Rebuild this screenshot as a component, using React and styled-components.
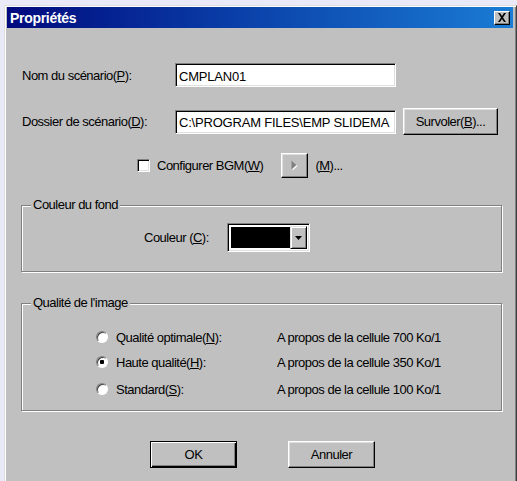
import React from 'react'
import styled, { createGlobalStyle } from 'styled-components'

const Global = createGlobalStyle`
    html, body {
        margin:0;
        padding:0;
        background:#e9e9f7;
        overflow:hidden;
    }
    body{
        font-family:"Liberation Sans", Arial, sans-serif;
        font-size:13px;
        letter-spacing:-0.5px;
        color:#000;
    }
`;

function U({ children }) {
    return <u>{children}</u>
}

function App() {
    return (
        <>
            <Global />
            <Window>
                <TitleBar>
                    <Title>Propriétés</Title>
                    <CloseBox>
                        <svg width="10" height="9" viewBox="0 0 10 9">
                            <path d="M1 0h2l2 3 2-3h2L6 4.5 9 9H7L5 6 3 9H1l3-4.5z" fill="#000" />
                        </svg>
                    </CloseBox>
                </TitleBar>
                <Body>
                    <FieldRow $top={35}>
                        <Label>Nom du scénario(<U>P</U>):</Label>
                        <TextBox $width={221}>CMPLAN01</TextBox>
                    </FieldRow>
                    <FieldRow $top={21}>
                        <Label>Dossier de scénario(<U>D</U>):</Label>
                        <TextBox $width={221}>C:\PROGRAM FILES\EMP SLIDEMA</TextBox>
                        <Button $width={95} $height={27} $ml={7}>Survoler(<U>B</U>)...</Button>
                    </FieldRow>
                    <BgmRow>
                        <CheckBox />
                        <span>Configurer BGM(<U>W</U>)</span>
                        <PlayButton>
                            <svg width="9" height="13" viewBox="0 0 9 13">
                                <path d="M1.5 1.5 L6.5 6 L1.5 10.5 Z" fill="#fff" transform="translate(1 1)" />
                                <path d="M1.5 1.5 L6.5 6 L1.5 10.5 Z" fill="#808080" />
                            </svg>
                        </PlayButton>
                        <span>(<U>M</U>)...</span>
                    </BgmRow>
                    <Group $top={27} $height={67}>
                        <Legend>Couleur du fond</Legend>
                        <ColorRow>
                            <span>Couleur (<U>C</U>):</span>
                            <Combo>
                                <Swatch />
                                <DropButton>
                                    <svg width="7" height="4" viewBox="0 0 7 4">
                                        <path d="M0 0h7L3.5 4z" fill="#000" />
                                    </svg>
                                </DropButton>
                            </Combo>
                        </ColorRow>
                    </Group>
                    <Group $top={31} $height={108}>
                        <Legend>Qualité de l'image</Legend>
                        <RadioList>
                            <RadioRow $top={24}>
                                <Radio />
                                <RadioLabel>Qualité optimale(<U>N</U>):</RadioLabel>
                                <span>A propos de la cellule 700 Ko/1</span>
                            </RadioRow>
                            <RadioRow $top={7}>
                                <Radio $checked />
                                <RadioLabel>Haute qualité(<U>H</U>):</RadioLabel>
                                <span>A propos de la cellule 350 Ko/1</span>
                            </RadioRow>
                            <RadioRow $top={9}>
                                <Radio />
                                <RadioLabel>Standard(<U>S</U>):</RadioLabel>
                                <span>A propos de la cellule 100 Ko/1</span>
                            </RadioRow>
                        </RadioList>
                    </Group>
                    <ButtonRow>
                        <Button $width={87} $height={27} $default>OK</Button>
                        <Button $width={87} $height={27}>Annuler</Button>
                    </ButtonRow>
                </Body>
            </Window>
        </>
    )
}

const Window = styled.div`
    margin:5px 0 0 4px;
    height:475px;
    background:#c0c0c0;
    border-top:1px solid #dfdfdf;
    border-left:1px solid #dfdfdf;
    border-right:1px solid #404040;
    box-shadow:inset 1px 1px #fff, inset -1px 0 #808080;
    padding:1px 3px 0 2px;
`;

const TitleBar = styled.div`
    height:21px;
    display:flex;
    align-items:center;
    justify-content:space-between;
    padding:0 3px 0 3px;
    background:linear-gradient(90deg, #000a7e 0%, #0a3fa8 45%, #1a7cd4 100%);
`;

const Title = styled.span`
    color:#fff;
    font-weight:bold;
    font-size:14px;
    letter-spacing:-0.3px;
`;

const CloseBox = styled.div`
    width:16px;
    height:14px;
    display:flex;
    align-items:center;
    justify-content:center;
    background:#c0c0c0;
    border:1px solid;
    border-color:#fff #000 #000 #fff;
    box-shadow:inset -1px -1px #808080;
    box-sizing:border-box;
`;

const Body = styled.div`
    padding:0 0 0 15px;
`;

const FieldRow = styled.div`
    display:flex;
    align-items:center;
    margin-top:${p => p.$top}px;
`;

const Label = styled.span`
    width:153px;
`;

const TextBox = styled.div`
    width:${p => p.$width}px;
    height:24px;
    box-sizing:border-box;
    background:#fff;
    border:1px solid;
    border-color:#808080 #fff #fff #808080;
    box-shadow:inset 1px 1px #000, inset -1px -1px #dfdfdf;
    padding:2px 0 0 3px;
    letter-spacing:-0.2px;
    white-space:nowrap;
    overflow:hidden;
    display:flex;
    align-items:center;
`;

const Button = styled.div`
    width:${p => p.$width}px;
    height:${p => p.$height}px;
    margin-left:${p => p.$ml || 0}px;
    box-sizing:border-box;
    display:flex;
    align-items:center;
    justify-content:center;
    background:#c0c0c0;
    border:1px solid;
    border-color:${p => p.$default ? '#000' : '#fff #000 #000 #fff'};
    box-shadow:${p => p.$default
        ? 'inset 1px 1px #fff, inset -1px -1px #000, inset -2px -2px #808080'
        : 'inset -1px -1px #808080, inset 1px 1px #dfdfdf'};
`;

const BgmRow = styled.div`
    display:flex;
    align-items:center;
    margin:18px 0 0 115px;
    height:25px;
`;

const CheckBox = styled.div`
    width:13px;
    height:13px;
    box-sizing:border-box;
    background:#fff;
    border:1px solid;
    border-color:#808080 #fff #fff #808080;
    box-shadow:inset 1px 1px #000, inset -1px -1px #dfdfdf;
    margin-right:7px;
`;

const PlayButton = styled.div`
    width:27px;
    height:25px;
    box-sizing:border-box;
    margin:0 7px 0 18px;
    display:flex;
    align-items:center;
    justify-content:center;
    border:1px solid;
    border-color:#fff #000 #000 #fff;
    box-shadow:inset -1px -1px #808080, inset 1px 1px #dfdfdf;
`;

const Group = styled.div`
    position:relative;
    margin:${p => p.$top}px 0 0 -1px;
    width:481px;
    height:${p => p.$height}px;
    box-sizing:border-box;
    border:1px solid #808080;
    box-shadow:inset 1px 1px #fff, 1px 1px #fff;
`;

const Legend = styled.span`
    position:absolute;
    top:-9px;
    left:9px;
    padding:0 2px;
    background:#c0c0c0;
`;

const ColorRow = styled.div`
    display:flex;
    align-items:center;
    gap:18px;
    margin:17px 0 0 122px;
`;

const Combo = styled.div`
    display:flex;
    width:83px;
    height:29px;
    box-sizing:border-box;
    background:#fff;
    border:1px solid;
    border-color:#808080 #fff #fff #808080;
    box-shadow:inset 1px 1px #000, inset -1px -1px #dfdfdf;
    padding:3px 2px 3px 3px;
`;

const Swatch = styled.div`
    flex:1;
    background:#000;
`;

const DropButton = styled.div`
    width:17px;
    box-sizing:border-box;
    display:flex;
    align-items:center;
    justify-content:center;
    background:#c0c0c0;
    margin:-1px 0 -1px 0;
    border:1px solid;
    border-color:#dfdfdf #000 #000 #dfdfdf;
    box-shadow:inset 1px 1px #fff, inset -1px -1px #808080;
`;

const RadioList = styled.div`
    display:flex;
    flex-direction:column;
    margin-left:74px;
`;

const RadioRow = styled.div`
    display:flex;
    align-items:center;
    height:18px;
    margin-top:${p => p.$top}px;
`;

const RadioLabel = styled.span`
    width:161px;
`;

const Radio = styled.div`
    width:12px;
    height:12px;
    border-radius:50%;
    box-sizing:border-box;
    margin-right:8px;
    background:${p => p.$checked
        ? 'radial-gradient(circle, #000 0 2px, #fff 2.5px)'
        : '#fff'};
    border:1px solid;
    border-color:#808080 #fff #fff #808080;
    box-shadow:inset 1px 1px #404040;
`;

const ButtonRow = styled.div`
    display:flex;
    gap:51px;
    margin:30px 0 0 128px;
`;

export default App
